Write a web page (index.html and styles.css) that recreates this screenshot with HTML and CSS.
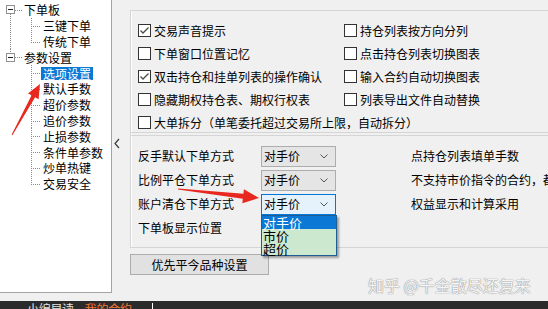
FILE: index.html
```html
<!DOCTYPE html>
<html lang="zh-CN">
<head>
<meta charset="utf-8">
<title>参数设置</title>
<link rel="stylesheet" href="styles.css">
</head>
<body>
<div class="screen">
  <div class="window">
    <div class="tree">
      <div class="row root first"><span class="exp"></span><span class="label">下单板</span></div>
      <div class="row child deep"><span class="label">三键下单</span></div>
      <div class="row child deep last"><span class="label">传统下单</span></div>
      <div class="row root second"><span class="exp"></span><span class="label">参数设置</span></div>
      <div class="row child"><span class="label selected">选项设置</span></div>
      <div class="row child"><span class="label">默认手数</span></div>
      <div class="row child"><span class="label">超价参数</span></div>
      <div class="row child"><span class="label">追价参数</span></div>
      <div class="row child"><span class="label">止损参数</span></div>
      <div class="row child"><span class="label">条件单参数</span></div>
      <div class="row child"><span class="label">炒单热键</span></div>
      <div class="row child last"><span class="label">交易安全</span></div>
    </div>
    <div class="splitter">
      <svg class="collapse" width="8" height="11" viewBox="0 0 8 11"><polyline points="6,1 2,5.5 6,10" fill="none" stroke="#3a3a3a" stroke-width="1.2"/></svg>
    </div>
    <div class="content">
      <div class="groups">
        <div class="group g1">
          <div class="cb"><span class="box"><svg width="11" height="11" viewBox="0 0 11 11"><polyline points="1.5,5.5 4,8 9.5,2.5" fill="none" stroke="#4a4a4a" stroke-width="1.3"/></svg></span>交易声音提示</div>
          <div class="cb"><span class="box"></span>持仓列表按方向分列</div>
          <div class="cb"><span class="box"></span>下单窗口位置记忆</div>
          <div class="cb"><span class="box"></span>点击持仓列表切换图表</div>
          <div class="cb"><span class="box"><svg width="11" height="11" viewBox="0 0 11 11"><polyline points="1.5,5.5 4,8 9.5,2.5" fill="none" stroke="#4a4a4a" stroke-width="1.3"/></svg></span>双击持仓和挂单列表的操作确认</div>
          <div class="cb"><span class="box"></span>输入合约自动切换图表</div>
          <div class="cb"><span class="box"></span>隐藏期权持仓表、期权行权表</div>
          <div class="cb"><span class="box"></span>列表导出文件自动替换</div>
          <div class="cb wide"><span class="box"></span>大单拆分（单笔委托超过交易所上限，自动拆分）</div>
        </div>
        <div class="group g2">
          <div class="lbl">反手默认下单方式</div>
          <div class="sel"><span>对手价</span><svg width="8" height="5" viewBox="0 0 8 5"><polyline points="0.5,0.5 4,4 7.5,0.5" fill="none" stroke="#555" stroke-width="1"/></svg></div>
          <div class="note">点持仓列表填单手数</div>

          <div class="lbl">比例平仓下单方式</div>
          <div class="sel"><span>对手价</span><svg width="8" height="5" viewBox="0 0 8 5"><polyline points="0.5,0.5 4,4 7.5,0.5" fill="none" stroke="#555" stroke-width="1"/></svg></div>
          <div class="note">不支持市价指令的合约，都按</div>

          <div class="lbl">账户清仓下单方式</div>
          <div class="sel focus"><span>对手价</span><svg width="8" height="5" viewBox="0 0 8 5"><polyline points="0.5,0.5 4,4 7.5,0.5" fill="none" stroke="#555" stroke-width="1"/></svg>
            <div class="dropdown">
              <div class="opt active">对手价</div>
              <div class="opt">市价</div>
              <div class="opt">超价</div>
            </div>
          </div>
          <div class="note">权益显示和计算采用</div>

          <div class="lbl">下单板显示位置</div>
        </div>
      </div>
      <div class="btn">优先平今品种设置</div>
    </div>
  </div>
  <div class="taskbar">
    <span class="tb-item">小编早读</span>
    <span class="tb-item orange">我的合约</span>
    <span class="caret"></span>
  </div>
  <div class="watermark">知乎 @千金散尽还复来</div>
  <svg class="arrows" width="548" height="309" viewBox="0 0 548 309">
    <polygon points="12.4,135.2 35.1,97.3 38.6,99.2 40,84 28,93.4 31.6,95.3 11.6,134.8" fill="#e8281e"/>
    <polygon points="177.9,189.5 242.8,198.7 242.3,203.2 259,198 243.9,189.2 243.4,193.7 178.1,188.5" fill="#e8281e"/>
  </svg>
</div>
</body>
</html>
```
FILE: styles.css
```css
html, body {
  margin: 0;
  padding: 0;
}
body {
  font-family: "Noto Sans CJK SC", "Noto Sans", sans-serif;
  font-size: 12px;
  color: #000;
  background: #f0f0f0;
}
.screen {
  width: 548px;
  height: 309px;
  overflow: hidden;
  position: relative;
  background: #f0f0f0;
}
.window {
  display: flex;
  height: 301px;
}

/* ---------- tree ---------- */
.tree {
  --dv: repeating-linear-gradient(to bottom, #8a8a8a 0 1px, transparent 1px 2px);
  --dh: repeating-linear-gradient(to right, #8a8a8a 0 1px, transparent 1px 2px);
  width: 112px;
  height: 293px;
  flex: none;
  box-sizing: border-box;
  background: #fff;
  border-right: 1px solid #a3a3a3;
  border-bottom: 1px solid #a3a3a3;
  padding-top: 2px;
}
.row {
  height: 15.8px;
  display: flex;
  align-items: center;
  white-space: nowrap;
  line-height: 14px;
}
.root {
  padding-left: 6px;
}
.root.first {
  background: var(--dv) 10px 8px / 1px 8px no-repeat, var(--dh) 15px 8px / 8px 1px no-repeat;
}
.root.second {
  background: var(--dv) 10px 0 / 1px 8px no-repeat, var(--dh) 15px 8px / 8px 1px no-repeat;
}
.exp {
  width: 9px;
  height: 9px;
  box-sizing: border-box;
  border: 1px solid #919191;
  background: #fff linear-gradient(#222, #222) center / 5px 1px no-repeat;
  margin-right: 8px;
  flex: none;
}
.label {
  padding: 0 2px;
  line-height: 13px;
}
.root .label {
  padding-left: 1px;
}
.child {
  padding-left: 41px;
  background: var(--dv) 31px 0 / 1px 100% no-repeat, var(--dh) 31px 8px / 9px 1px no-repeat;
}
.child.last {
  background: var(--dv) 31px 0 / 1px 8px no-repeat, var(--dh) 31px 8px / 9px 1px no-repeat;
}
.child.deep {
  background: var(--dv) 31px 0 / 1px 100% no-repeat, var(--dh) 31px 8px / 9px 1px no-repeat, var(--dv) 10px 0 / 1px 100% no-repeat;
}
.child.deep.last {
  background: var(--dv) 31px 0 / 1px 8px no-repeat, var(--dh) 31px 8px / 9px 1px no-repeat, var(--dv) 10px 0 / 1px 100% no-repeat;
}
.selected {
  background: #0a78d4;
  color: #fff;
  height: 13px;
}

/* ---------- splitter ---------- */
.splitter {
  width: 18px;
  flex: none;
  padding: 138px 0 0 1px;
  box-sizing: border-box;
}
.collapse {
  display: block;
}

/* ---------- content ---------- */
.content {
  flex: 1;
  min-width: 0;
  padding-top: 10px;
  display: flex;
  flex-direction: column;
  align-items: flex-start;
}
.groups {
  align-self: stretch;
  border-left: 1px solid #d5d5d5;
  box-shadow: inset 1px 0 0 #fff;
}
.group {
  border-top: 1px solid #d5d5d5;
  border-bottom: 1px solid #d5d5d5;
  box-sizing: border-box;
  white-space: nowrap;
}
.g1 {
  height: 123px;
  padding: 8px 0 0 7px;
  display: grid;
  grid-template-columns: 206px auto;
  grid-auto-rows: 23px;
  align-items: center;
}
.cb {
  display: flex;
  align-items: center;
  gap: 2px;
  line-height: 14px;
}
.cb.wide {
  grid-column: 1 / span 2;
}
.box {
  width: 13px;
  height: 13px;
  box-sizing: border-box;
  border: 1px solid #333;
  background: #fff;
  flex: none;
  display: flex;
  align-items: center;
  justify-content: center;
  margin-right: 1px;
}
.box svg {
  display: block;
}
.g2 {
  margin-top: 2px;
  padding: 8px 0 7px 7px;
  display: grid;
  grid-template-columns: 123px 75px 75px auto;
  grid-auto-rows: 24px;
  align-items: center;
}
.lbl {
  grid-column: 1;
  line-height: 14px;
}
.note {
  grid-column: 4;
  line-height: 14px;
}
.sel {
  grid-column: 2;
  height: 21px;
  box-sizing: border-box;
  border: 1px solid #adadad;
  background: #e5e5e5;
  display: flex;
  align-items: center;
  justify-content: space-between;
  padding: 0 7px 0 2px;
  line-height: 14px;
  position: relative;
}
.sel svg {
  display: block;
}
.sel.focus {
  border-color: #0078d7;
  background: #e5f1fb;
}
.dropdown {
  position: absolute;
  left: -1px;
  top: calc(100% + 1px);
  width: 76px;
  box-sizing: border-box;
  border: 1px solid #1e5c92;
  background: #cce8cf;
  box-shadow: 2px 2px 2px rgba(0, 0, 0, 0.35);
  font-size: 13px;
  line-height: 13px;
  z-index: 2;
}
.opt {
  height: 13px;
  padding-left: 1px;
}
.opt.active {
  height: 13.5px;
  background: #0a78d4;
  color: #fff;
}
.btn {
  margin-top: 6px;
  width: 139px;
  height: 21px;
  box-sizing: border-box;
  border: 1px solid #adadad;
  background: #e1e1e1;
  display: flex;
  align-items: center;
  justify-content: center;
  line-height: 14px;
}

/* ---------- taskbar ---------- */
.taskbar {
  height: 8px;
  background: #2b2b2b;
  overflow: hidden;
  display: flex;
  align-items: flex-start;
  padding-left: 27px;
}
.tb-item {
  color: #e4e4e4;
  font-size: 12px;
  line-height: 12px;
  margin-top: 2px;
  letter-spacing: -0.3px;
}
.tb-item.orange {
  color: #f07636;
  margin-left: 11px;
}
.caret {
  width: 1px;
  height: 6px;
  background: #fff;
  margin: 2px 0 0 20px;
}

/* ---------- overlays ---------- */
.watermark {
  position: absolute;
  left: 368px;
  top: 276px;
  font-size: 16px;
  line-height: 18px;
  color: rgba(255, 255, 255, 0.92);
  text-shadow: 0 0 1px #8a8a8a, 0 0 1px #8a8a8a;
  white-space: nowrap;
}
.arrows {
  position: absolute;
  left: 0;
  top: 0;
  pointer-events: none;
}
```
